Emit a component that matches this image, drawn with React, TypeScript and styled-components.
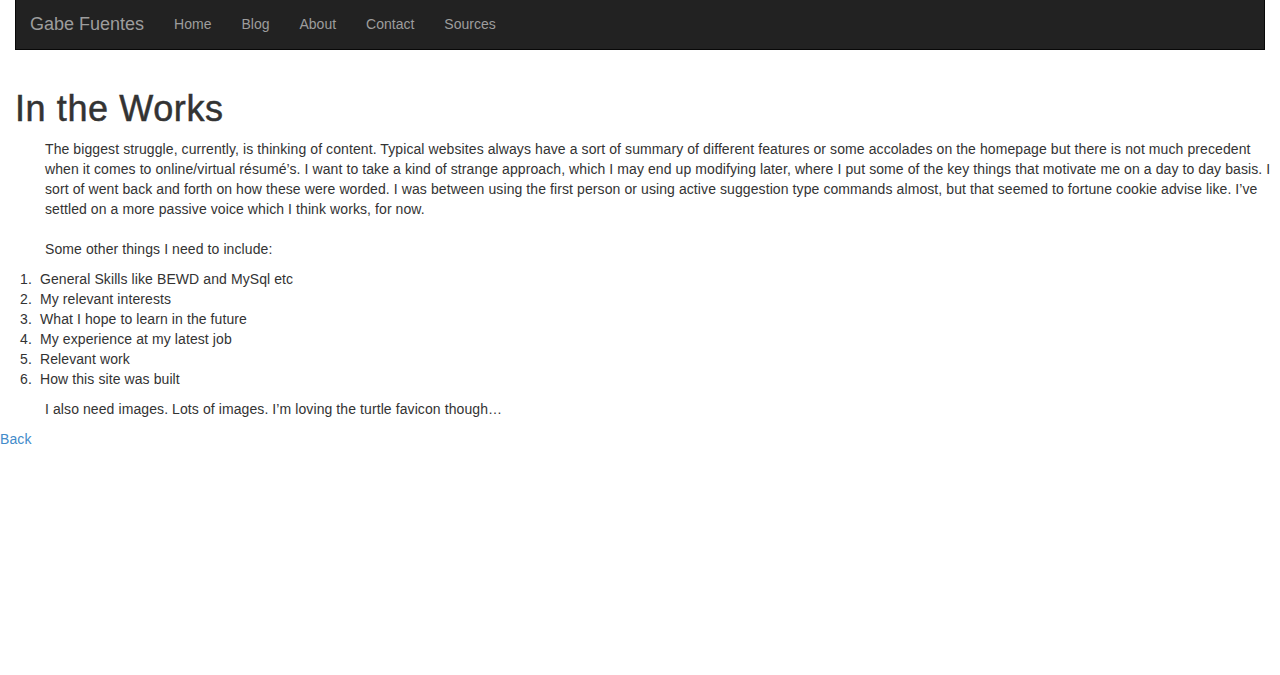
import React from "react";
import styled, { createGlobalStyle } from "styled-components";

const Global = createGlobalStyle`
  html, body { margin: 0; padding: 0; background: #fff; }
  body {
    font-family: "Liberation Sans", Arial, sans-serif;
    font-size: 14px;
    line-height: 20px;
    color: #333;
    letter-spacing: 0.09px;
  }
  * { box-sizing: border-box; }
`;

const Navbar = styled.nav`
  margin: 0 15px 39px;
  height: 50px;
  background: #222;
  border: 1px solid #080808;
  border-top: none;
  display: flex;
  align-items: center;
  padding: 0 15px 2px;
`;

const Brand = styled.a`
  font-size: 18px;
  line-height: 20px;
  color: #9d9d9d;
  text-decoration: none;
  padding-right: 15px;
  letter-spacing: 0;
  margin-left: -1px;
`;

const NavLink = styled.a`
  font-size: 14px;
  line-height: 20px;
  color: #9d9d9d;
  text-decoration: none;
  padding: 15px;
  letter-spacing: 0;
  &:first-of-type { margin-left: -2px; }
`;

const Title = styled.h1`
  margin: 0 15px 10px;
  font-size: 36px;
  font-weight: 400;
  line-height: 1.1;
  color: #333;
  letter-spacing: 0.6px;
  -webkit-text-stroke: 0.5px #333;
`;

const Para = styled.p`
  margin: 0 0 10px;
  padding-left: 45px;
  padding-right: 4px;
`;

const List = styled.ol`
  margin: 0 0 10px;
  padding-left: 40px;
  list-style: none;
  counter-reset: item;
`;

const Item = styled.li`
  counter-increment: item;
  &::before {
    content: counter(item) ".";
    display: inline-block;
    width: 20px;
    margin-left: -20px;
  }
`;

const BackLink = styled.a`
  color: #428bca;
  text-decoration: none;
`;

export default function App() {
  return (
    <>
      <Global />
      <Navbar>
        <Brand href="#">Gabe Fuentes</Brand>
        {["Home", "Blog", "About", "Contact", "Sources"].map((l) => (
          <NavLink key={l} href="#">
            {l}
          </NavLink>
        ))}
      </Navbar>
      <Title>In the Works</Title>
      <Para>
        The biggest struggle, currently, is thinking of content. Typical websites always have a sort of summary of
        different features or some accolades on the homepage but there is not much precedent when it comes to
        online/virtual résumé’s. I want to take a kind of strange approach, which I may end up modifying later, where I
        put some of the key things that motivate me on a day to day basis. I sort of went back and forth on how these
        were worded. I was between using the first person or using active suggestion type commands almost, but that
        seemed to fortune cookie advise like. I’ve settled on a more passive voice which I think works, for now.
        <br />
        <br />
        Some other things I need to include:
      </Para>
      <List>
        <Item>General Skills like BEWD and MySql etc</Item>
        <Item>My relevant interests</Item>
        <Item>What I hope to learn in the future</Item>
        <Item>My experience at my latest job</Item>
        <Item>Relevant work</Item>
        <Item>How this site was built</Item>
      </List>
      <Para>I also need images. Lots of images. I’m loving the turtle favicon though…</Para>
      <BackLink href="#">Back</BackLink>
    </>
  );
}
